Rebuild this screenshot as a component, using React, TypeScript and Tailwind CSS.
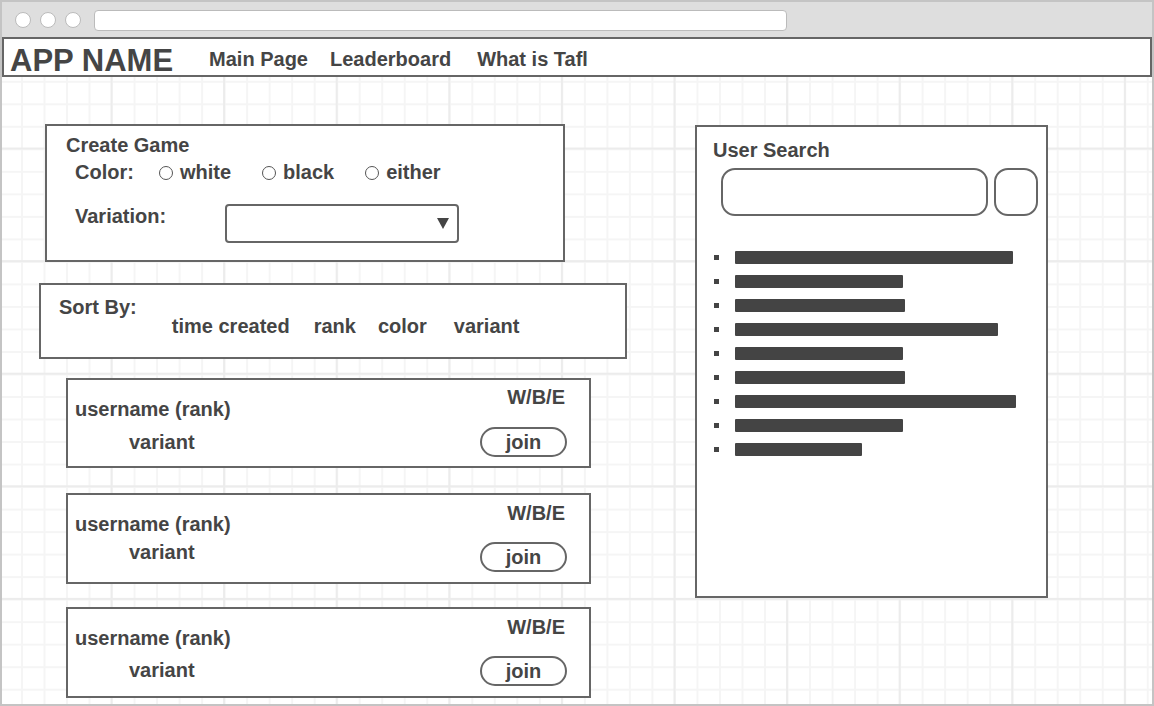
const cards = [
  { mt: 'mt-[19px]', h: 'h-[90px]', wbe: 'pt-[6px]', join: 'mt-[18px]', variant: 'mt-[10px]' },
  { mt: 'mt-[25px]', h: 'h-[91px]', wbe: 'pt-[7px]', join: 'mt-[17px]', variant: 'mt-[5px]' },
  { mt: 'mt-[23px]', h: 'h-[91px]', wbe: 'pt-[7px]', join: 'mt-[17px]', variant: 'mt-[9px]' },
];

const bars = [278, 168, 170, 263, 168, 170, 281, 168, 127];

function Radio({ label, className }: { label: string; className?: string }) {
  return (
    <div className={`flex items-center ${className ?? ''}`}>
      <span className="w-[14px] h-[14px] rounded-full border-[1.5px] border-[#555] bg-white" />
      <span className="ml-[7px]">{label}</span>
    </div>
  );
}

export default function App() {
  return (
    <div className="w-[1154px] h-[706px] border-2 border-[#c4c4c4] flex flex-col overflow-hidden bg-white font-['Liberation_Sans',Arial,sans-serif] font-bold text-[#454545]">
      {/* browser chrome */}
      <div className="h-[35px] bg-[#dedede] flex items-center pl-[13px] shrink-0">
        <span className="w-[16px] h-[16px] rounded-full bg-white border border-[#bbb]" />
        <span className="w-[16px] h-[16px] rounded-full bg-white border border-[#bbb] ml-[9px]" />
        <span className="w-[16px] h-[16px] rounded-full bg-white border border-[#bbb] ml-[9px]" />
        <div className="ml-[13px] w-[693px] h-[21px] bg-white border-[1.5px] border-[#bbb] rounded-[4px] mt-[1px]" />
      </div>

      {/* nav */}
      <div className="h-[40px] bg-white border-2 border-[#666] flex items-start pl-[6px] shrink-0">
        <span className="pt-[6px] text-[31px] leading-none">APP NAME</span>
        <span className="pt-[10px] ml-[36px] text-[20px] leading-none">Main Page</span>
        <span className="pt-[10px] ml-[22px] text-[20px] leading-none">Leaderboard</span>
        <span className="pt-[10px] ml-[26px] text-[20px] leading-none">What is Tafl</span>
      </div>

      {/* content */}
      <div className="flex-1 flex items-start text-[20px] leading-[23px] bg-[linear-gradient(to_right,#ececec_2px,transparent_2px),linear-gradient(to_bottom,#ececec_2px,transparent_2px),linear-gradient(to_right,#f5f5f5_2px,transparent_2px),linear-gradient(to_bottom,#f5f5f5_2px,transparent_2px)] bg-[size:112.6px_112.6px,112.6px_112.6px,22.52px_22.52px,22.52px_22.52px] bg-[position:108.5px_0,0_70.5px,19px_0,0_3.8px]">
        {/* left column */}
        <div className="flex flex-col pl-[37px]">
          {/* create game */}
          <div className="ml-[6px] mt-[47px] w-[520px] h-[138px] border-2 border-[#666] bg-white pt-[8px]">
            <div className="pl-[19px]">Create Game</div>
            <div className="pl-[28px] mt-[4px] flex items-center">
              <span>Color:</span>
              <Radio label="white" className="ml-[25px]" />
              <Radio label="black" className="ml-[31px]" />
              <Radio label="either" className="ml-[31px]" />
            </div>
            <div className="pl-[28px] mt-[20px] flex items-start">
              <span className="w-[150px] mt-[1px]">Variation:</span>
              <div className="w-[234px] h-[39px] border-2 border-[#666] rounded-[4px] flex items-center justify-end pr-[8px]">
                <svg width="12" height="11" viewBox="0 0 12 11">
                  <polygon points="0,0 12,0 6,11" fill="#444" />
                </svg>
              </div>
            </div>
          </div>

          {/* sort by */}
          <div className="mt-[21px] w-[588px] h-[76px] border-2 border-[#666] bg-white flex items-start pl-[18px] pt-[11px]">
            <span>Sort By:</span>
            <div className="flex mt-[19px]">
              <span className="ml-[35px]">time created</span>
              <span className="ml-[24px]">rank</span>
              <span className="ml-[22px]">color</span>
              <span className="ml-[27px]">variant</span>
            </div>
          </div>

          {/* game list */}
          {cards.map((c, i) => (
            <div
              key={i}
              className={`${c.mt} ${c.h} ml-[27px] w-[525px] border-2 border-[#666] bg-white flex justify-between pl-[7px] pr-[22px]`}
            >
              <div className="flex flex-col pt-[18px]">
                <span>username (rank)</span>
                <span className={`${c.variant} ml-[54px]`}>variant</span>
              </div>
              <div className={`flex flex-col items-end ${c.wbe}`}>
                <span className="mr-[2px]">W/B/E</span>
                <div className={`${c.join} w-[87px] h-[30px] rounded-full border-2 border-[#666] flex items-center justify-center`}>
                  join
                </div>
              </div>
            </div>
          ))}
        </div>

        {/* user search */}
        <div className="ml-[68px] mt-[48px] w-[353px] h-[473px] border-2 border-[#666] bg-white pt-[12px]">
          <div className="pl-[16px]">User Search</div>
          <div className="flex pl-[24px] mt-[6px]">
            <div className="w-[267px] h-[48px] border-2 border-[#666] rounded-[14px]" />
            <div className="ml-[6px] w-[44px] h-[48px] border-2 border-[#666] rounded-[14px]" />
          </div>
          <ul className="mt-[35px] flex flex-col gap-[11px]">
            {bars.map((w, i) => (
              <li key={i} className="flex items-center h-[13px] pl-[17px]">
                <span className="w-[5px] h-[5px] bg-[#444]" />
                <span className="ml-[16px] h-[13px] bg-[#444] rounded-[1px]" style={{ width: w }} />
              </li>
            ))}
          </ul>
        </div>
      </div>
    </div>
  );
}
